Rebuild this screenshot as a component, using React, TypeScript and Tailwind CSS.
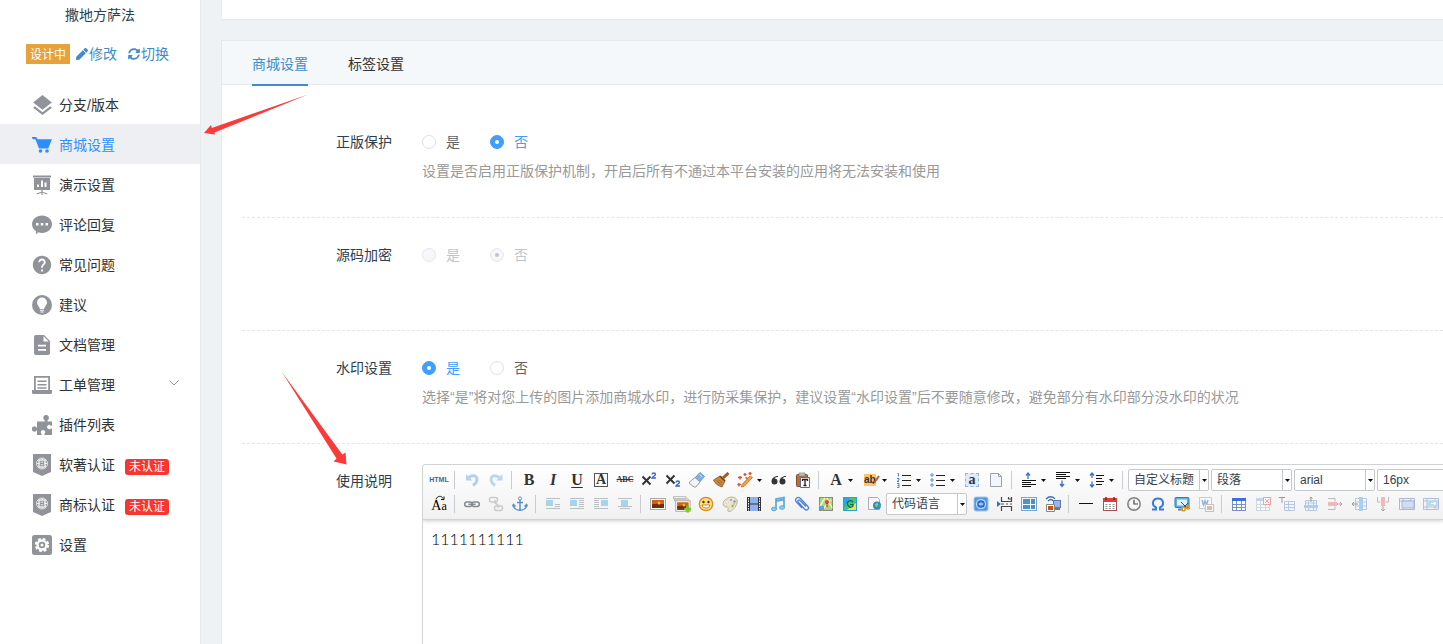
import { useState } from 'react';
import type { ReactNode } from 'react';
import clsx from 'clsx';
import { FaPen, FaSyncAlt } from 'react-icons/fa';
import { MdHelp, MdLayers } from 'react-icons/md';

interface SvgProps {
  children: ReactNode;
  className?: string;
}

const Svg20 = ({ children, className }: SvgProps) => (
  <svg viewBox="0 0 20 20" className={clsx('size-5', className)} fill="currentColor" aria-hidden="true">
    {children}
  </svg>
);

const Svg16 = ({ children, className }: SvgProps) => (
  <svg viewBox="0 0 16 16" className={clsx('size-4', className)} fill="none" aria-hidden="true">
    {children}
  </svg>
);

/* ---------- sidebar ---------- */

const CartIcon = () => (
  <Svg20>
    <path d="M0 2h4.200l1.400 2.200H20l-3 7.300-.8 2H7L3.400 4.200H1.500C.5 4.200 0 3.300 0 2z" />
    <circle cx="8.500" cy="16" r="1.800" />
    <circle cx="15" cy="16" r="1.800" />
  </Svg20>
);

const BoardIcon = () => (
  <Svg20>
    <path d="M1 .5h18v2H1zM2 3h16v12H2z" />
    <path d="M5 9.500h2V12H5zM9 5.500h2V12H9zM12.500 7.500h2V12h-2z" fill="#fff" />
    <path d="M9.400 15h1.200v5H9.400zM4.500 18.600l5.500-2.200 5.500 2.200-.3 1L10 17.600l-5.200 2z" />
  </Svg20>
);

const CommentIcon = () => (
  <Svg20>
    <path d="M10 .5c5.500 0 10 3.900 10 8.700s-4.500 8.700-10 8.700c-1.300 0-2.600-.2-3.700-.6L4 19.500v-3.300C1.600 14.600 0 12.100 0 9.200 0 4.400 4.500.5 10 .5z" />
    <path d="M4 8h2.500v2.500H4zM8.800 8h2.500v2.500H8.800zM13.500 8H16v2.500h-2.500z" fill="#fff" />
  </Svg20>
);

const BulbIcon = () => (
  <Svg20>
    <circle cx="10" cy="10" r="10" />
    <path d="M10 2.500a5 5 0 0 0-5 5c0 2.900 2.500 3.600 2.800 6.500h4.400c.3-2.900 2.800-3.600 2.800-6.500a5 5 0 0 0-5-5zM7.900 14.800h4.200v1H7.900zM8.500 16.500h3v1h-3z" fill="#fff" />
  </Svg20>
);

const FileIcon = () => (
  <Svg20>
    <path d="M4 0h8l6 6v12a2 2 0 0 1-2 2H4a2 2 0 0 1-2-2V2a2 2 0 0 1 2-2z" />
    <path d="M11.500 1.200v5.300h5.300zM6 9.800h8v1.700H6zM6 14h8v1.700H6z" fill="#fff" />
  </Svg20>
);

const TicketIcon = () => (
  <Svg20>
    <path d="M2 1h16v14h2v2.500a1.500 1.500 0 0 1-1.500 1.500h-17A1.500 1.500 0 0 1 0 17.500V15h2zM3.800 2.800V15h12.400V2.800z" fillRule="evenodd" />
    <path d="M5.500 5.500h9v1.600h-9zM5.500 9h9v1.600h-9zM5.500 12.300h9v1.500h-9z" />
  </Svg20>
);

const PuzzleIcon = () => (
  <Svg20>
    <path d="M5 6.500h7.700V5.200a2.800 2.800 0 1 1 2.800 0v1.300H20v4.200h-1.200a2.100 2.100 0 1 0 0 2.800H20V20h-7.600v-1.300a2.100 2.100 0 1 0-2.800 0V20H5v-4.600H4.400a2.500 2.500 0 1 1 0-2.800H5z" />
  </Svg20>
);

const ShieldIcon = () => (
  <svg viewBox="0 0 20 22" className="h-[22px] w-5" fill="currentColor" aria-hidden="true">
    <path d="M1 0h18v18l-9 4-9-4z" />
    <g fill="none" stroke="#fff">
      <circle cx="10" cy="9.500" r="5.500" strokeWidth=".7" />
      <rect x="7" y="6" width="6" height="7" strokeWidth="1.200" />
      <path d="M4.700 9.500h3M12.300 9.500h3M8.500 8.200h3M8.500 10.800h3M10 4.200V6M10 13v1.800" strokeWidth=".8" />
    </g>
  </svg>
);

const SettingIcon = () => (
  <Svg20>
    <rect width="20" height="20" rx="2.500" />
    <circle cx="10" cy="10" r="5.700" fill="#fff" />
    <circle cx="10" cy="10" r="6.200" fill="none" stroke="#fff" strokeWidth="2" strokeDasharray="2.800 2.070" />
    <circle cx="10" cy="10" r="3.300" />
    <circle cx="10" cy="10" r="1.500" fill="#fff" />
  </Svg20>
);

interface MenuItem {
  label: string;
  icon: ReactNode;
  badge?: string;
  hasChildren?: boolean;
}

const menuItems: MenuItem[] = [
  { label: '分支/版本', icon: <MdLayers className="size-[25px] shrink-0" /> },
  { label: '商城设置', icon: <CartIcon /> },
  { label: '演示设置', icon: <BoardIcon /> },
  { label: '评论回复', icon: <CommentIcon /> },
  { label: '常见问题', icon: <MdHelp className="size-[22px] shrink-0" /> },
  { label: '建议', icon: <BulbIcon /> },
  { label: '文档管理', icon: <FileIcon /> },
  { label: '工单管理', icon: <TicketIcon />, hasChildren: true },
  { label: '插件列表', icon: <PuzzleIcon /> },
  { label: '软著认证', icon: <ShieldIcon />, badge: '未认证' },
  { label: '商标认证', icon: <ShieldIcon />, badge: '未认证' },
  { label: '设置', icon: <SettingIcon /> },
];

const Sidebar = () => {
  const [active, setActive] = useState('商城设置');

  return (
    <aside className="w-[201px] shrink-0 border-r border-[#e6eaee] bg-white">
      <div className="pt-[5px] text-center leading-5 text-[#2c3e50]">撒地方萨法</div>
      <div className="mt-[19px] flex h-5 items-center pl-[26px] text-[#428bca]">
        <span className="h-5 bg-[#e6a23c] px-1 pt-0.5 text-xs leading-[18px] text-white">设计中</span>
        <a href="#edit" className="ml-1.5 flex items-center gap-px">
          <FaPen className="size-3" />
          修改
        </a>
        <a href="#switch" className="ml-[11px] flex items-center gap-px">
          <FaSyncAlt className="size-3" />
          切换
        </a>
      </div>
      <nav className="mt-5">
        {menuItems.map((item) => (
          <a
            key={item.label}
            href="#menu"
            onClick={() => setActive(item.label)}
            className={clsx(
              'flex h-10 items-center pt-0.5 pr-5 pl-8',
              active === item.label ? 'bg-[#eeeff3] text-[#2d8ffb]' : 'text-[#303133]'
            )}
          >
            <span
              className={clsx(
                'flex w-5 items-center justify-center',
                active === item.label ? 'text-[#2d8ffb]' : 'text-[#909399]'
              )}
            >
              {item.icon}
            </span>
            <span className="ml-[7px]">{item.label}</span>
            {item.badge && (
              <span className="mt-1 ml-2.5 rounded-[3px] bg-[#f7362f] px-1 text-xs leading-4 text-white">
                {item.badge}
              </span>
            )}
            {item.hasChildren && (
              <svg viewBox="0 0 12 12" className="mb-0.5 ml-auto size-3 text-[#909399]" fill="none" stroke="currentColor" aria-hidden="true">
                <path d="M1.500 2.500L6 7l4.500-4.500" />
              </svg>
            )}
          </a>
        ))}
      </nav>
    </aside>
  );
};

/* ---------- editor toolbar ---------- */

interface Tool {
  kind: 'button' | 'separator' | 'select';
  label?: string;
  icon?: ReactNode;
  hasMenu?: boolean;
}

const separator: Tool = { kind: 'separator' };
const tool = (label: string, icon: ReactNode, hasMenu = false): Tool => ({ kind: 'button', label, icon, hasMenu });
const select = (label: string): Tool => ({ kind: 'select', label });

const Lines = ({ d, color = '#222' }: { d: string; color?: string }) => (
  <path d={d} stroke={color} strokeWidth="1" />
);

const ImageAlign = ({ x, y, lines }: { x: number; y: number; lines: string }) => (
  <Svg16>
    <Lines d={lines} color="#bcbfc2" />
    <rect x={x} y={y} width="7" height="6" fill="#a3d5ee" />
  </Svg16>
);

const Grid = ({ stroke, head }: { stroke: string; head: string }) => (
  <>
    <rect x="1.500" y="2.500" width="13" height="12" fill="#fff" stroke={stroke} />
    <path d="M1.500 8.500h13M1.500 11.500h13M5.500 5v9.500M10.500 5v9.500" stroke={stroke} />
    <path d="M1 2h14v3H1z" fill={head} />
  </>
);

const Photo = () => (
  <>
    <rect x=".5" y="2.500" width="15" height="11" fill="#fff" stroke="#a9a9a9" />
    <path d="M2 4h12v8H2z" fill="#d5600f" />
    <path d="M2 8h4l2-1 3 1h3v4H2z" fill="#6d2e12" />
    <circle cx="9" cy="7" r="1.500" fill="#ffb83a" />
  </>
);

const firstRow: Tool[] = [
  tool('源代码', <span className="font-['Liberation_Sans'] text-[7px] font-bold text-[#2e6b9c]">HTML</span>),
  separator,
  tool('撤销', <Svg16><path d="M2 2v6.500h6.500z" fill="#b5d1f0" /><path d="M4 6.500C6 3.500 13 2 13 7.500c0 3-2 4.500-4 6" stroke="#b5d1f0" strokeWidth="3" /></Svg16>),
  tool('重做', <Svg16><path d="M14.500 2v6.500H8z" fill="#bcd7f2" /><path d="M12 6.500C10 3.500 3 2 3 7.500c0 3 2 4.500 4 6" stroke="#bcd7f2" strokeWidth="3" /></Svg16>),
  separator,
  tool('加粗', <span className="font-['Liberation_Serif'] text-base font-bold">B</span>),
  tool('斜体', <span className="font-['Liberation_Serif'] text-base font-bold italic">I</span>),
  tool('下划线', <span className="font-['Liberation_Serif'] text-base font-bold underline underline-offset-2">U</span>),
  tool('字符边框', <span className="flex size-3.5 items-center justify-center border border-[#555] font-['Liberation_Serif'] text-sm font-bold">A</span>),
  tool('删除线', <span className="font-['Liberation_Serif'] text-[8px] font-bold line-through">ABC</span>),
  tool('上标', <Svg16><path d="M1.500 4.500l8 8M9.500 4.500l-8 8" stroke="#333" strokeWidth="2" /><path d="M11 2.500c0-2 3.500-2 3.500 0 0 1-3 2-3.500 3.500h4" stroke="#3465c8" strokeWidth="1.300" /></Svg16>),
  tool('下标', <Svg16><path d="M1.500 3.500l8 8M9.500 3.500l-8 8" stroke="#333" strokeWidth="2" /><path d="M11 10.500c0-2 3.500-2 3.500 0 0 1-3 2-3.500 3.500h4" stroke="#3465c8" strokeWidth="1.300" /></Svg16>),
  tool('清除格式', <Svg16><path d="M11 .5l4.500 4-8 9-5-4z" fill="#82b1e8" stroke="#5c85b8" strokeWidth=".8" /><path d="M6 5.500l5 4.500-4 5H5L.5 11.500V10z" fill="#f3f5f8" stroke="#8a94a5" strokeWidth=".9" /><path d="M10.500 2.500l3 2.500" stroke="#d7eaff" /></Svg16>),
  tool('格式刷', <Svg16><path d="M15.500 1L10 6" stroke="#a65a22" strokeWidth="3" /><path d="M7 4l5 5-3 6C6 14 2 12 .5 8z" fill="#c98a40" stroke="#8c511f" strokeWidth=".8" /><path d="M7 4l5 5" stroke="#743f1d" strokeWidth="1.700" /><path d="M4 8.500l3.500 4M6 7.500l3 4" stroke="#8c511f" strokeWidth=".7" /></Svg16>),
  tool('自动排版', <Svg16><path d="M15.500 5.500L7 14.500l-2.500.5.500-2.500L13 4z" fill="#f2a13b" stroke="#ab6b30" strokeWidth=".7" /><path d="M3 4v3.500M1 5.500h4M8 1v3M6.500 2.500h3M13 0v3M11.500 1.500h3M2 11v3.500M.3 12.500h3.500M8.500 5.500l2 1" stroke="#e0522b" strokeWidth="1.400" /></Svg16>, true),
  tool('引用', <Svg16><path d="M7 4C3 4 .5 6.500.5 9.500a3 3 0 1 0 3-3C4 5.500 5 5 7 5zM15 4c-4 0-6.500 2.500-6.500 5.500a3 3 0 1 0 3-3C12 5.500 13 5 15 5z" fill="#333" /></Svg16>),
  tool('纯文本粘贴', <Svg16><rect x="1.500" y="2.500" width="11" height="12" rx="1" fill="#b8703b" stroke="#80502e" /><rect x="4" y="1" width="6" height="3" fill="#bcc0c7" stroke="#777" strokeWidth=".6" /><path d="M5.500 5.500h9v10h-9z" fill="#fff" stroke="#5b6f95" /><path d="M7.500 9V7.500h5V9M10 7.500v6M8.500 13.500h3" stroke="#222" strokeWidth="1.300" /></Svg16>),
  separator,
  tool('字体颜色', <span className="font-['Liberation_Serif'] text-base font-bold">A</span>, true),
  tool('背景色', <span className="relative flex h-3 w-3 items-center bg-[#fbc56c] font-['Liberation_Sans'] text-[10px] font-bold">ab<svg viewBox="0 0 8 10" className="absolute left-2 h-3 w-2" fill="none"><path d="M7 1L2 8" stroke="#c7552f" strokeWidth="2" /><path d="M2 7l-1 2" stroke="#333" /></svg></span>, true),
  tool('有序列表', <Svg16><Lines d="M6 3.500h9M6 8.500h9M6 13.500h9" /><path d="M1.500 1.500h1v3M1 6.500h2v1.500l-2 1.500h2M1 11.500h2v4H1M1.500 13.500H3" stroke="#4b83e8" /></Svg16>, true),
  tool('无序列表', <Svg16><Lines d="M6 3.500h9M6 8.500h9M6 13.500h9" /><g stroke="#4b83e8"><circle cx="2" cy="3" r="1.200" /><circle cx="2" cy="8" r="1.200" /><circle cx="2" cy="13" r="1.200" /></g></Svg16>, true),
  tool('全选', <span className="flex size-3.5 items-center justify-center border border-dashed border-[#8cb4ed] bg-[#dfebfb] font-['Liberation_Serif'] text-sm leading-3 font-bold">a</span>),
  tool('清空文档', <Svg16><path d="M2.500 1.500h8l3 3v10h-11z" fill="#f2f5f9" stroke="#9aa2ad" /><path d="M10.500 1.500v3h3" stroke="#9aa2ad" /></Svg16>),
  separator,
  tool('段前距', <Svg16><path d="M7 7V2M5 3.500L7 1l2 2.500" stroke="#3f73c8" strokeWidth="1.300" /><Lines d="M1 8.500h14M1 10.500h9M1 12.500h14M1 14.500h9" color="#111" /></Svg16>, true),
  tool('段后距', <Svg16><Lines d="M1 .5h14M1 2.500h10M1 4.500h14M1 6.500h10" color="#111" /><path d="M7 8.500V14M5 12l2 2.500L9 12" stroke="#3f73c8" strokeWidth="1.300" /></Svg16>, true),
  tool('行间距', <Svg16><path d="M3 1v5M1 3.500L3 1l2 2.500M3 9.500V15M1 12.500L3 15l2-2.500" stroke="#3f73c8" strokeWidth="1.300" /><Lines d="M7 3.500h8M7 6.500h6M7 9.500h8M7 12.500h6" color="#111" /></Svg16>, true),
  separator,
  select('自定义标题'),
  select('段落'),
  select('arial'),
  select('16px'),
];

const secondRow: Tool[] = [
  tool('字母大小写', <span className="relative flex items-baseline pt-1 font-['Liberation_Serif'] text-sm leading-3 font-medium text-black">A<span className="text-xs leading-3">a</span><svg viewBox="0 0 10 5" className="absolute -top-px left-1 h-1.5 w-2.5" fill="none" stroke="#111"><path d="M1 4c1-4 6-4 7-1M9 1v3H6" /></svg></span>),
  separator,
  tool('超链接', <Svg16><g stroke="#858a90" strokeWidth="1.600"><rect x=".8" y="6" width="7.200" height="4.500" rx="2" /><rect x="8" y="6" width="7.200" height="4.500" rx="2" /><path d="M4.500 8.200h7" /></g></Svg16>),
  tool('取消链接', <Svg16><g stroke="#c9cbcd" strokeWidth="1.500"><rect x="1.500" y="1.500" width="8" height="4.500" rx="2" /><rect x="6.500" y="10" width="8" height="4.500" rx="2" /><path d="M7 4v3l3 2v3" /></g></Svg16>),
  tool('锚点', <Svg16><circle cx="8" cy="2.500" r="1.600" stroke="#5792cd" /><path d="M8 4v11M5 6.500h6M1.500 9c0 7 13 7 13 0M.5 10.500l1-2 2 2M12.500 10.500l2-2 1 2" stroke="#5792cd" strokeWidth="1.500" /></Svg16>),
  separator,
  tool('左浮动', <ImageAlign x={1} y={4} lines="M1 2.500h14M10 8.500h5M10 10.500h5M1 12.500h14" />),
  tool('默认', <ImageAlign x={1} y={4} lines="M1 2.500h14M10 4.500h5M10 6.500h5M10 8.500h5M10 10.500h5M1 12.500h14" />),
  tool('右浮动', <ImageAlign x={8} y={4} lines="M1 2.500h14M1 4.500h5M1 6.500h5M1 8.500h5M1 10.500h5M1 12.500h14" />),
  tool('居中', <ImageAlign x={4} y={4} lines="M1 2.500h14M1 10.500h14M3 12.500h10" />),
  separator,
  tool('单图上传', <Svg16><Photo /></Svg16>),
  tool('多图上传', <Svg16 className="size-[18px]"><path d="M.5 1.500h11v2h-11zM1.500 3.500h12v2h-12z" fill="#fff" stroke="#a5a5a5" strokeWidth=".7" /><g transform="translate(2 3) scale(.85)"><Photo /></g><path d="M13 9.500v6M10 12.500h6" stroke="#7ac529" strokeWidth="2.500" /></Svg16>),
  tool('表情', <Svg16><circle cx="8" cy="8" r="6.700" fill="#ffdf7a" stroke="#d98a2c" strokeWidth="1.300" /><circle cx="5.500" cy="6" r="1.200" fill="#4a3418" /><circle cx="10.500" cy="6" r="1.200" fill="#4a3418" /><path d="M4 9h8c-.5 4-7.500 4-8 0z" fill="#fff" stroke="#b76b20" strokeWidth=".8" /></Svg16>),
  tool('涂鸦', <Svg16><path d="M5 2.500c4-3 12-1 10 4.500-1 4-5 8.500-8 8.500-3 0 1-4.500-2-4.500C-.5 11 0 5 5 2.500z" fill="#e9e4d2" stroke="#b5ae99" strokeWidth=".9" /><circle cx="5" cy="6" r="1.300" fill="#fff" stroke="#c8c0a8" strokeWidth=".5" /><circle cx="9" cy="4" r="1" fill="#d88c6b" /><circle cx="12.500" cy="5.500" r="1.200" fill="#6ca0cd" /><circle cx="10.500" cy="10" r="1.200" fill="#84b96b" /><circle cx="12" cy="8" r="1" fill="#efb64b" /></Svg16>),
  tool('视频', <Svg16><path d="M1 1h14v14H1z" fill="#30343a" /><path d="M4 1h8v6.500H4zM4 8.500h8V15H4z" fill="#8eb1ed" /><path d="M2.500 2v13M13.500 2v13" stroke="#fff" strokeDasharray="1.500 1" /></Svg16>),
  tool('音乐', <Svg16><path d="M6 13V3l8-1.500v10" stroke="#5ba9da" strokeWidth="1.700" /><path d="M6 5l8-1.500" stroke="#5ba9da" strokeWidth="2" /><ellipse cx="4" cy="13" rx="2.500" ry="1.800" fill="#8fc9ee" stroke="#5ba9da" /><ellipse cx="12" cy="11.500" rx="2.500" ry="1.800" fill="#8fc9ee" stroke="#5ba9da" /></Svg16>),
  tool('附件', <Svg16><path d="M12 10.500L6 4.500C4.500 3 3 5 4.500 6.500l6 6.500c2.500 2.500 5.500-.5 3-3L6.500 2.500c-3-3-6.500 1-4 3.500L8 12" stroke="#4b83e0" strokeWidth="1.300" /></Svg16>),
  tool('Baidu地图', <Svg16><rect x="1.500" y="1.500" width="13" height="13" fill="#a9d493" stroke="#8a8a78" /><path d="M2 10l5-8M4 14l9-10M9 2l5 10" stroke="#fff1aa" strokeWidth="1.500" /><path d="M2 10h4v4H2z" fill="#5ca5d8" /><circle cx="9" cy="6" r="2" fill="#db4830" /><path d="M9 7v4" stroke="#962b20" /></Svg16>),
  tool('Google地图', <Svg16><rect x="1.500" y="1.500" width="13" height="13" fill="#3fc878" stroke="#2b9edb" /><path d="M2 2h6L2 12z" fill="#27a8ed" /><path d="M14 7v7H5z" fill="#f6e044" /><path d="M11 6C8 3 4 6 6 9.500s6 1 5-1H8" stroke="#155e50" strokeWidth="1.200" /></Svg16>),
  tool('插入Iframe', <Svg16><path d="M2.500 1.500h9l2 2v10h-11z" fill="#f5f7fa" stroke="#a6adb7" /><circle cx="11" cy="9.500" r="4" fill="#3387bd" /><path d="M8.500 8.500l3-2 1 2-2 3zM13 10l1.500-1v2z" fill="#82cb77" /></Svg16>),
  select('代码语言'),
  tool('百度应用', <Svg16><rect x="1" y="1" width="14" height="14" rx="2" fill="#5a96df" stroke="#9ac6f2" /><circle cx="8" cy="8" r="4.500" fill="#2f68c4" stroke="#b2d6fa" strokeWidth="1.300" /><path d="M5.500 8c1-2 4-2 5 0-1 2-4 2-5 0z" fill="#92caf5" /></Svg16>),
  tool('分页', <Svg16><path d="M4.500 1v4.500h10V1M4.500 15v-4.500h10V15M11.500 1v2h3" stroke="#444" strokeWidth="1.200" /><Lines d="M4 8h3M9 8h2M13 8h2" color="#555" /><path d="M0 5l4 3-4 3z" fill="#3c71c1" /></Svg16>),
  tool('模板', <Svg16><rect x=".5" y="1.500" width="15" height="13" fill="#f4f8fc" stroke="#78a5d0" /><path d="M2 3h7v5H2zM2 9h7v4H2zM10 3h4v5h-4zM10 9h4v4h-4z" fill="#4893c9" /></Svg16>),
  tool('远程图片', <Svg16><path d="M1 3c3-3 7-3 9 0M3 5c2-2 4-2 5 0" stroke="#3b6ebc" strokeWidth="1.300" /><rect x="8.500" y="4.500" width="7" height="7" fill="#95b8e9" stroke="#6078b4" /><path d="M10 13h5" stroke="#777" strokeWidth="2" /><path d="M1.500 8.500h8v7h-8z" fill="#fff" stroke="#888" /><path d="M3 10h5v4H3z" fill="#c65418" /></Svg16>),
  separator,
  tool('分隔线', <Svg16><Lines d="M1 7.500h14" color="#111" /></Svg16>),
  tool('日期', <Svg16><rect x="1.500" y="2.500" width="13" height="12" fill="#fff" stroke="#a35050" /><path d="M1 2h14v4H1z" fill="#dc3f38" /><path d="M4 1v3M12 1v3" stroke="#7f2522" strokeWidth="1.500" /><path d="M3.500 8.500h9M3.500 10.500h9M3.500 12.500h9" stroke="#999" strokeDasharray="2 1.500" /></Svg16>),
  tool('时间', <Svg16><circle cx="8" cy="8" r="6.200" fill="#f7f7f7" stroke="#808487" strokeWidth="1.500" /><path d="M8 4v4h4" stroke="#444" strokeWidth="1.200" /><path d="M8 2.500v1M8 12.500v1M2.500 8h1" stroke="#888" /></Svg16>),
  tool('特殊字符', <Svg16><path d="M2 13.500h4v-2C1 9 2.500 2.500 8 2.500S15 9 10 11.500v2h4" stroke="#3f78dd" strokeWidth="2" /></Svg16>),
  tool('截图', <Svg16><rect x="1" y="1.500" width="14" height="10" rx="1" fill="#5fb0de" stroke="#3d7ca8" /><path d="M3 3.500h10v6H3z" fill="#dcf2fd" /><path d="M4 13.500h5" stroke="#698697" strokeWidth="2" /><path d="M7 6l6 6M14 7l-5 5" stroke="#3e4d61" /><circle cx="9.500" cy="13" r="1.800" stroke="#d89a2a" strokeWidth="1.500" /><circle cx="14" cy="11.500" r="1.500" stroke="#d89a2a" strokeWidth="1.500" /></Svg16>),
  tool('Word图片转存', <Svg16><g opacity=".55"><rect x="1.500" y="1.500" width="12" height="11" fill="#f6f9fd" stroke="#8daddc" /><path d="M4 4l1.500 5L7 5l1.500 4L10 4" stroke="#477abc" strokeWidth="1.500" /><rect x="7.500" y="8.500" width="8" height="7" fill="#fff" stroke="#999" /><path d="M9 10h5v4H9z" fill="#d28b62" /></g></Svg16>),
  separator,
  tool('插入表格', <Svg16><Grid stroke="#7791c1" head="#3c6ee0" /></Svg16>),
  tool('删除表格', <Svg16 className="opacity-50"><Grid stroke="#aebbd1" head="#96add8" /><rect x="8.500" y="1.500" width="7" height="7" fill="#fff" stroke="#e65353" /><path d="M10 3l4 4M14 3l-4 4" stroke="#e65353" /></Svg16>),
  tool('表格前插入行', <Svg16><path d="M0 1.500h6M3 1v6" stroke="#999" /><path d="M5.500 5.500h10v9h-10zM5.500 8.500h10M5.500 11.500h10M9.500 5v9.500" stroke="#b6c8e3" /></Svg16>),
  tool('前插入行', <Svg16><path d="M2.500 4.500h11v10h-11zM2.500 7h11M5.500 5v9.500M10.500 5v9.500" stroke="#b6c8e3" /><path d="M1 9h14v3H1z" fill="#a5d2f2" /><path d="M8 6V1M6.500 2.500L8 1l1.500 1.500" stroke="#999" /></Svg16>),
  tool('删除行', <Svg16><path d="M1 2.500h7v3M1 13.500h7v-3" stroke="#bbb" /><path d="M1 6h9v4H1z" fill="#f0b9b9" /><path d="M10 8h5M13 6l2 2-2 2" stroke="#b5a0a0" /></Svg16>),
  tool('前插入列', <Svg16><path d="M4.500 2.500h11v11h-11zM4.500 6h11M4.500 10h11" stroke="#b6c8e3" /><path d="M8 1h4v14H8z" fill="#a5d2f2" /><path d="M7 8H1M3 6L1 8l2 2" stroke="#999" /></Svg16>),
  tool('删除列', <Svg16><path d="M2.500 1v5h3M13.500 1v5h-3" stroke="#bbb" /><path d="M6 1h4v9H6z" fill="#f0b9b9" /><path d="M8 10v5M6 13l2 2 2-2" stroke="#b5a0a0" /></Svg16>),
  tool('合并多个单元格', <Svg16><path d="M.5 2.500h15v11H.5zM.5 5h15M4 2v12M12 2v3" stroke="#abb8d2" /><path d="M3 5h12v7H3z" fill="#d2dcf5" stroke="#a5b5d5" /></Svg16>),
  tool('右合并单元格', <Svg16><path d="M.5 2.500h15v11H.5zM.5 5h15M.5 11h15M4 2v12M12 2v12" stroke="#abc1dc" /><path d="M4 5h11v5H4z" fill="#b9dcf5" /><path d="M8 7.500h5M11 6l2 1.500L11 9" stroke="#fff" /></Svg16>),
];

const Caret = () => (
  <svg viewBox="0 0 5 3" className="h-[3px] w-[5px]" fill="#111" aria-hidden="true">
    <path d="M0 0h5L2.500 3z" />
  </svg>
);

const ToolbarRow = ({ tools }: { tools: Tool[] }) => (
  <div className="flex h-6 items-center">
    {tools.map((item, index) => {
      if (item.kind === 'separator') {
        return <span key={index} className="mr-[5px] ml-[3px] h-[18px] w-px shrink-0 bg-[#c8cbd2]" />;
      }
      if (item.kind === 'select') {
        return (
          <span key={index} className="relative mr-0.5 w-[81px] shrink-0">
            <select
              aria-label={item.label}
              className="block h-[22px] w-full appearance-none rounded-[2px] border border-[#c6c9cc] bg-white pl-[5px] text-xs text-[#33414f]"
            >
              <option>{item.label}</option>
            </select>
            <span className="pointer-events-none absolute inset-y-px right-px flex w-[9px] items-center justify-center border-l border-[#c6c9cc]">
              <Caret />
            </span>
          </span>
        );
      }
      return (
        <button
          key={index}
          type="button"
          aria-label={item.label}
          className={clsx('flex h-6 shrink-0 items-center text-[#333]', item.hasMenu ? 'w-[34px]' : 'w-6')}
        >
          <span className="flex w-6 shrink-0 items-center justify-center leading-4">{item.icon}</span>
          {item.hasMenu && <Caret />}
        </button>
      );
    })}
  </div>
);

const Editor = () => (
  <div className="mt-[3px] min-w-0 flex-1 overflow-hidden rounded-tl border-t border-l border-[#d0d2d4]">
    <div className="border-b border-[#d0d2d4] bg-linear-to-b from-white to-[#f1f1f1] py-[3px] pl-1 shadow-[0_1px_4px_rgba(0,0,0,0.2)]">
      <ToolbarRow tools={firstRow} />
      <ToolbarRow tools={secondRow} />
    </div>
    <textarea
      id="usage"
      defaultValue="1111111111"
      className="block h-80 w-full resize-none px-2 py-[7px] font-['Lato',sans-serif] text-base font-light text-black outline-none"
    />
  </div>
);

/* ---------- settings form ---------- */

interface RadioRowProps {
  name: string;
  label: string;
  defaultValue: string;
  help?: string;
  disabled?: boolean;
}

const RadioRow = ({ name, label, defaultValue, help, disabled }: RadioRowProps) => {
  const [value, setValue] = useState(defaultValue);

  return (
    <fieldset className="flex min-h-[113px] gap-[30px] border-b border-dashed border-[#e6e6e6] pt-[17px]">
      <div id={name} className="w-[150px] shrink-0 text-right leading-10 text-[#2c3e50]">{label}</div>
      <div role="radiogroup" aria-labelledby={name}>
        <div className="flex h-10 items-center gap-[30px]">
          {['是', '否'].map((option) => (
            <label
              key={option}
              className={clsx(
                'flex items-center gap-2.5',
                disabled ? 'text-[#c0c4cc]' : value === option ? 'text-[#409eff]' : 'text-[#606266]'
              )}
            >
              <input
                type="radio"
                name={name}
                checked={value === option}
                disabled={disabled}
                onChange={() => setValue(option)}
                className="flex size-3.5 appearance-none items-center justify-center rounded-full border border-[#dcdfe6] bg-white checked:border-[#409eff] checked:bg-[#409eff] before:size-1 before:rounded-full before:bg-white disabled:border-[#e4e7ed] disabled:bg-[#f5f7fa] disabled:before:bg-[#f5f7fa] disabled:checked:before:bg-[#c0c4cc]"
              />
              {option}
            </label>
          ))}
        </div>
        {help && <p className="leading-[18px] text-[#999]">{help}</p>}
      </div>
    </fieldset>
  );
};

const tabs = ['商城设置', '标签设置'];

const SettingsPanel = () => {
  const [tab, setTab] = useState(tabs[0]);

  return (
    <section className="mt-5 border-t border-l border-[#e6eaee] bg-white">
      <div className="flex h-11 gap-10 border-b border-[#e6eaee] bg-[#f4f8fb] px-[30px]">
        {tabs.map((name) => (
          <button
            key={name}
            type="button"
            onClick={() => setTab(name)}
            className={clsx(
              'h-[45px] border-b-2 pt-0.5',
              tab === name ? 'border-[#428bca] text-[#428bca]' : 'border-transparent text-[#333]'
            )}
          >
            {name}
          </button>
        ))}
      </div>
      <form className="pt-5 pl-5">
        <RadioRow
          name="protect"
          label="正版保护"
          defaultValue="否"
          help="设置是否启用正版保护机制，开启后所有不通过本平台安装的应用将无法安装和使用"
        />
        <RadioRow name="encrypt" label="源码加密" defaultValue="否" disabled />
        <RadioRow
          name="watermark"
          label="水印设置"
          defaultValue="是"
          help="选择“是”将对您上传的图片添加商城水印，进行防采集保护，建议设置“水印设置”后不要随意修改，避免部分有水印部分没水印的状况"
        />
        <div className="flex gap-[30px] pt-[17px]">
          <label htmlFor="usage" className="w-[150px] shrink-0 text-right leading-10 text-[#2c3e50]">
            使用说明
          </label>
          <Editor />
        </div>
      </form>
    </section>
  );
};

const App = () => (
  <div className="relative flex h-screen overflow-hidden bg-[#eef2f5] font-['Liberation_Sans','Noto_Sans_CJK_SC',sans-serif] text-sm">
    <Sidebar />
    <main className="min-w-0 flex-1 pl-5">
      <div className="h-5 border-b border-l border-[#e6eaee] bg-white" />
      <SettingsPanel />
    </main>
    <svg className="pointer-events-none absolute top-0 left-0 h-[480px] w-[360px]" viewBox="0 0 360 480" fill="#fb3b3a" aria-hidden="true">
      <path d="M308 94.500L214.500 132.500l.5 2-11-1.500 7-8 .8 3z" />
      <path d="M281.500 371.500L336.500 458.500l-3 3 13 3-1-12-3.200 2z" />
    </svg>
  </div>
);

export default App;
